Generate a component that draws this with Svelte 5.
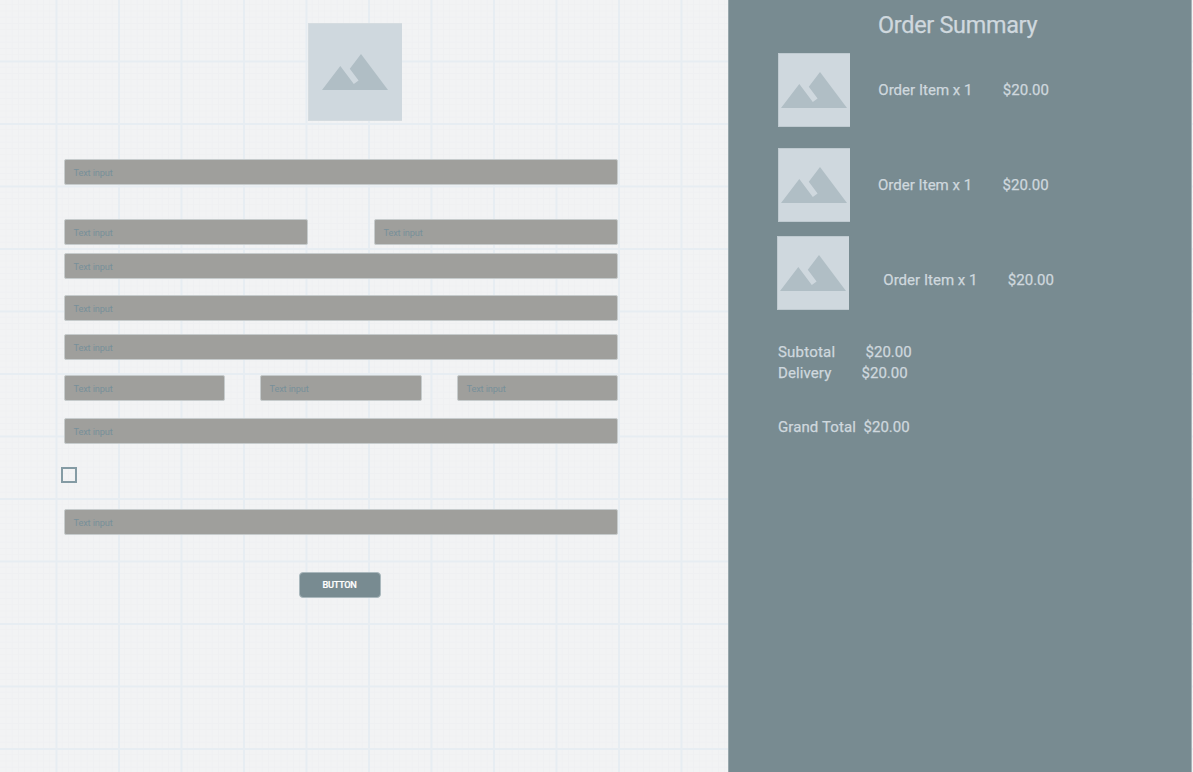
<script>
  const formRows = [
    { top: 38.5, height: 26, columns: [554] },
    { top: 34, height: 26, columns: [244, 244] },
    { top: 8, height: 26, columns: [554] },
    { top: 16, height: 26, columns: [554] },
    { top: 13, height: 26, columns: [554] },
    { top: 15.4, height: 26, columns: [161, 162, 161] },
    { top: 16.6, height: 26, columns: [554] }
  ];
  const items = [
    { top: 13, shift: 0, textShift: 0, textTop: 26.5 },
    { top: 21, shift: -0.3, textShift: 0, textTop: 26.5 },
    { top: 14, shift: -1, textShift: 6, textTop: 33.5 }
  ];
</script>

{#snippet mountains()}
  <svg class="mountains" width="66" height="37" viewBox="0 0 66 37" aria-hidden="true">
    <path d="M0 36 18.3 12.1 31.8 30.1 36.6 26.6 27.8 14.8 39 0 66 36Z" />
  </svg>
{/snippet}

<main class="page">
  <section class="form">
    <div class="logo">{@render mountains()}</div>
    {#each formRows as row}
      <div class="row" style="margin-top:{row.top}px;height:{row.height}px">
        {#each row.columns as width}
          <div class="input" style="width:{width}px">Text input</div>
        {/each}
      </div>
    {/each}
    <span class="checkbox" role="checkbox" aria-checked="false" tabindex="0"></span>
    <div class="row last"><div class="input wide">Text input</div></div>
    <button type="button">BUTTON</button>
  </section>

  <aside class="summary">
    <h1>Order Summary</h1>
    {#each items as item}
      <div class="item" style="margin-top:{item.top}px;margin-left:{item.shift}px">
        <div class="thumb">{@render mountains()}</div>
        <div class="label" style="padding-top:{item.textTop}px;padding-left:{item.textShift}px">
          <span class="name">Order Item x 1</span><span>$20.00</span>
        </div>
      </div>
    {/each}
    <div class="totals">
      <div><span class="subtotal">Subtotal</span><span>$20.00</span></div>
      <div><span class="delivery">Delivery</span><span>$20.00</span></div>
      <div class="grand"><span class="grand-label">Grand Total</span><span>$20.00</span></div>
    </div>
  </aside>
</main>

<style>
  :global(body) {
    margin: 0;
    overflow: hidden;
  }
  .page {
    display: flex;
    width: 1193px;
    height: 772px;
    overflow: hidden;
    box-sizing: border-box;
    font-family: Roboto, sans-serif;
    background-color: #f2f3f4;
    background-image:
      linear-gradient(90deg, #e7edf2 2px, transparent 2px),
      linear-gradient(#e7edf2 2px, transparent 2px),
      linear-gradient(90deg, #eff0f2 1px, transparent 1px),
      linear-gradient(#eff0f2 1px, transparent 1px);
    background-size: 62.5px 62.5px, 62.5px 62.5px, 6.25px 6.25px, 6.25px 6.25px;
    background-position: -7px 0, 0 -2px, -7px 0, 0 -2px;
  }
  .form {
    width: 728px;
    flex: none;
    box-sizing: border-box;
    padding: 23px 0 0 64px;
    display: flex;
    flex-direction: column;
    align-items: flex-start;
  }
  .logo {
    width: 94px;
    height: 97.5px;
    margin-left: 244.3px;
    box-sizing: border-box;
    border: 1px solid #d5dce0;
    border-right: 0;
    background: #cfd8de;
    padding: 30px 0 0 13px;
  }
  .mountains {
    display: block;
    fill: #b0bec5;
  }
  .row {
    width: 554px;
    display: flex;
    justify-content: space-between;
  }
  .input {
    height: 26px;
    box-sizing: border-box;
    border: 1px solid #c6cbcc;
    border-radius: 2px;
    background: #9f9f9c;
    padding-left: 8.5px;
    color: #78909a;
    font-size: 9.2px;
    line-height: 26px;
    letter-spacing: -0.12px;
  }
  .wide {
    width: 554px;
  }
  .checkbox {
    width: 16px;
    height: 16px;
    margin: 23px 0 0 -2.8px;
    box-sizing: border-box;
    border: 2px solid #849ba4;
  }
  .last {
    margin-top: 26px;
  }
  button {
    width: 82px;
    height: 26px;
    margin: 37px 0 0 234.5px;
    padding: 0 0 1px;
    border: 1px solid #aab8bd;
    border-radius: 4px;
    background: #788b91;
    color: #fff;
    font: 500 9.2px Roboto, sans-serif;
    letter-spacing: -0.3px;
    -webkit-text-stroke: 0.2px #fff;
  }
  .summary {
    width: 463.5px;
    flex: none;
    box-sizing: border-box;
    border-left: 1px solid #98a7ac;
    border-right: 1px solid #a8b4b9;
    background: #788b91;
    color: #cfd8de;
    padding: 10px 0 0 49px;
    font-size: 15px;
    line-height: 21px;
    letter-spacing: 0.02px;
    -webkit-text-stroke: 0.25px #cfd8de;
  }
  h1 {
    margin: 0 0 0 100px;
    font-size: 23.4px;
    line-height: 30px;
    font-weight: 400;
    letter-spacing: -0.28px;
  }
  .item {
    display: flex;
    height: 74px;
  }
  .thumb {
    width: 72px;
    height: 74px;
    flex: none;
    box-sizing: border-box;
    border: 1px solid #bfcad0;
    border-right: 0;
    background: #cfd8de;
    padding: 17.8px 0 0 2px;
  }
  .label {
    display: flex;
    margin-left: 28.3px;
    white-space: nowrap;
  }
  .name {
    width: 124.5px;
  }
  .totals {
    margin-top: 31.5px;
    white-space: nowrap;
  }
  .totals div {
    display: flex;
  }
  .subtotal {
    width: 87.5px;
    letter-spacing: 0.2px;
  }
  .delivery {
    width: 83.5px;
    letter-spacing: 0.1px;
  }
  .grand {
    margin-top: 33px;
  }
  .grand-label {
    width: 85.5px;
    letter-spacing: 0.1px;
  }
</style>
